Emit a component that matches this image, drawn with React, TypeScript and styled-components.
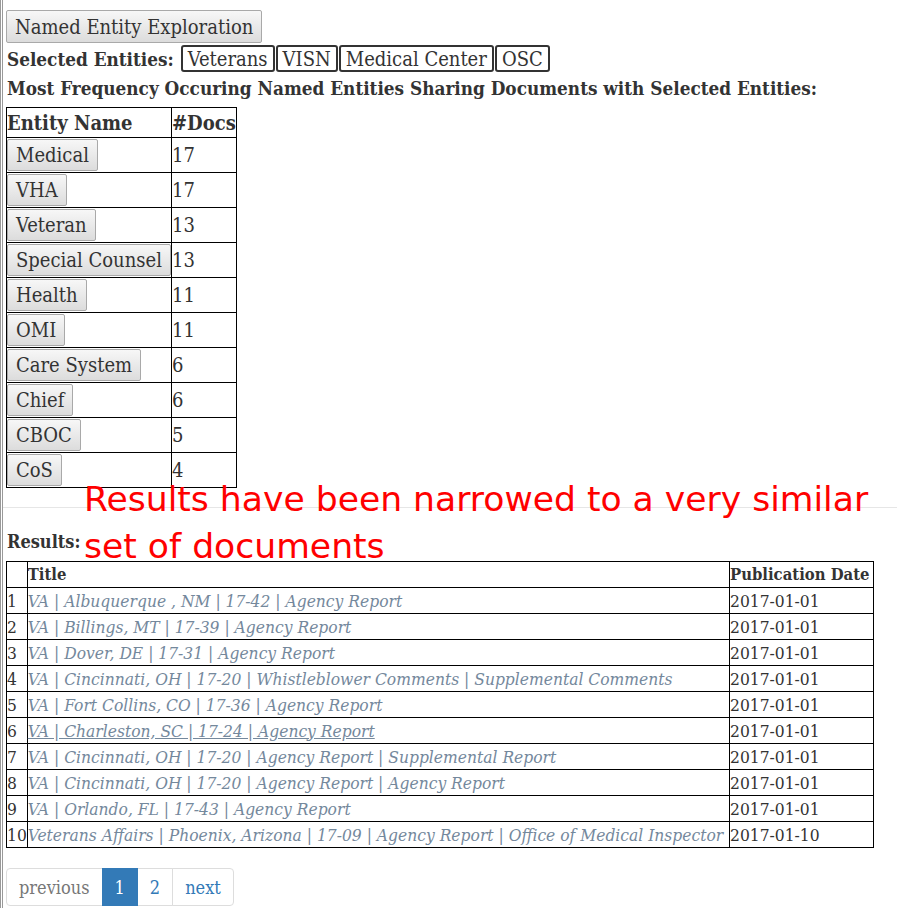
import React from "react";
import styled, { createGlobalStyle } from "styled-components";

const GlobalStyle = createGlobalStyle`
  html, body { margin: 0; padding: 0; background: #fff; }
`;

const Page = styled.div`
  position: relative;
  min-height: 908px;
  box-sizing: border-box;
  border-left: 3px double #999;
  padding: 10px 0 0 3px;
  font-family: "DejaVu Serif Condensed", "DejaVu Serif", serif;
  font-stretch: condensed;
  color: #333;
  font-size: 20px;
`;

const GrayButton = styled.button<{ $h?: number }>`
  display: inline-flex;
  align-items: center;
  box-sizing: border-box;
  height: ${(p) => p.$h ?? 33}px;
  padding: 0 8px;
  margin: 0;
  font: inherit;
  font-stretch: condensed;
  color: #333;
  background: linear-gradient(#f7f7f7, #dcdcdc);
  border: 1px solid #a9a9a9;
  border-radius: 2px;
  cursor: pointer;
  white-space: nowrap;
`;

const SelectedRow = styled.div`
  display: flex;
  align-items: center;
  height: 27px;
  margin-top: 2px;
  gap: 1px;
`;

const BoldLabel = styled.span`
  font-weight: bold;
  font-size: 18.8px;
  margin-right: 6px;
  padding-left: 1px;
`;

const Chip = styled.span`
  display: inline-flex;
  align-items: center;
  box-sizing: border-box;
  height: 27px;
  padding: 0 5px;
  border: 2px solid #333;
  border-radius: 3px;
`;

const Heading = styled.div`
  font-weight: bold;
  font-size: 18.8px;
  height: 30px;
  line-height: 30px;
  margin-top: 1px;
  padding-left: 1px;
`;

const EntityTable = styled.table`
  border-collapse: collapse;
  margin-top: 4px;
  th, td {
    border: 1px solid #000;
    padding: 0;
    text-align: left;
    vertical-align: middle;
  }
  th {
    height: 29px;
    font-weight: bold;
  }
  td {
    height: 34px;
  }
`;

const NameCell = styled.td`
  width: 164px;
`;

const CountCell = styled.td`
  width: 62px;
`;

const Rule = styled.hr`
  border: 0;
  border-top: 1px solid #e6e6e6;
  margin: 19px 0 0 -3px;
`;

const Notice = styled.div`
  position: absolute;
  left: 81px;
  right: 0;
  top: 476px;
  font-family: "DejaVu Sans", sans-serif;
  font-stretch: normal;
  font-size: 34.6px;
  line-height: 47px;
  color: #ff0000;
`;

const ResultsLabel = styled.div`
  font-weight: bold;
  font-size: 18px;
  height: 33px;
  margin-top: 20px;
  padding-left: 1px;
  line-height: 28px;
`;

const ResultsTable = styled.table`
  border-collapse: collapse;
  width: 868px;
  font-size: 17.3px;
  th, td {
    border: 1px solid #000;
    padding: 0;
    text-align: left;
    height: 25px;
    white-space: nowrap;
  }
  th {
    font-weight: bold;
    font-size: 16.5px;
  }
`;

const IdxCell = styled.td`
  width: 18px;
`;

const DateCell = styled.td`
  width: 143px;
`;

const TitleLink = styled.a<{ $hover?: boolean }>`
  color: #74889c;
  font-style: italic;
  text-decoration: ${(p) => (p.$hover ? "underline" : "none")};
  cursor: pointer;
`;

const Pager = styled.nav`
  display: flex;
  margin-top: 20px;
  font-size: 18px;
`;

const PageItem = styled.a<{ $active?: boolean; $disabled?: boolean; $first?: boolean; $last?: boolean }>`
  display: flex;
  align-items: center;
  box-sizing: border-box;
  height: 38px;
  padding: 0 12px;
  margin-left: ${(p) => (p.$first ? "0" : "-1px")};
  border: 1px solid ${(p) => (p.$active ? "#337ab7" : "#ddd")};
  background: ${(p) => (p.$active ? "#337ab7" : "#fff")};
  color: ${(p) => (p.$active ? "#fff" : p.$disabled ? "#777" : "#337ab7")};
  border-radius: ${(p) => (p.$first ? "4px 0 0 4px" : p.$last ? "0 4px 4px 0" : "0")};
  position: relative;
  z-index: ${(p) => (p.$active ? 1 : 0)};
  cursor: pointer;
`;

const entities: [string, number][] = [
  ["Medical", 17],
  ["VHA", 17],
  ["Veteran", 13],
  ["Special Counsel", 13],
  ["Health", 11],
  ["OMI", 11],
  ["Care System", 6],
  ["Chief", 6],
  ["CBOC", 5],
  ["CoS", 4],
];

const results: [string, string][] = [
  ["VA | Albuquerque , NM | 17-42 | Agency Report", "2017-01-01"],
  ["VA | Billings, MT | 17-39 | Agency Report", "2017-01-01"],
  ["VA | Dover, DE | 17-31 | Agency Report", "2017-01-01"],
  ["VA | Cincinnati, OH | 17-20 | Whistleblower Comments | Supplemental Comments", "2017-01-01"],
  ["VA | Fort Collins, CO | 17-36 | Agency Report", "2017-01-01"],
  ["VA | Charleston, SC | 17-24 | Agency Report", "2017-01-01"],
  ["VA | Cincinnati, OH | 17-20 | Agency Report | Supplemental Report", "2017-01-01"],
  ["VA | Cincinnati, OH | 17-20 | Agency Report | Agency Report", "2017-01-01"],
  ["VA | Orlando, FL | 17-43 | Agency Report", "2017-01-01"],
  ["Veterans Affairs | Phoenix, Arizona | 17-09 | Agency Report | Office of Medical Inspector", "2017-01-10"],
];

export default function App() {
  return (
    <>
      <GlobalStyle />
      <Page>
        <GrayButton>Named Entity Exploration</GrayButton>
        <SelectedRow>
          <BoldLabel>Selected Entities:</BoldLabel>
          {["Veterans", "VISN", "Medical Center", "OSC"].map((e) => (
            <Chip key={e}>{e}</Chip>
          ))}
        </SelectedRow>
        <Heading>Most Frequency Occuring Named Entities Sharing Documents with Selected Entities:</Heading>
        <EntityTable>
          <thead>
            <tr>
              <th>Entity Name</th>
              <th>#Docs</th>
            </tr>
          </thead>
          <tbody>
            {entities.map(([n, c]) => (
              <tr key={n}>
                <NameCell>
                  <GrayButton $h={32}>{n}</GrayButton>
                </NameCell>
                <CountCell>{c}</CountCell>
              </tr>
            ))}
          </tbody>
        </EntityTable>
        <Rule />
        <Notice>Results have been narrowed to a very similar set of documents</Notice>
        <ResultsLabel>Results:</ResultsLabel>
        <ResultsTable>
          <thead>
            <tr>
              <th></th>
              <th>Title</th>
              <th>Publication Date</th>
            </tr>
          </thead>
          <tbody>
            {results.map(([t, d], i) => (
              <tr key={i}>
                <IdxCell>{i + 1}</IdxCell>
                <td>
                  <TitleLink $hover={i === 5}>{t}</TitleLink>
                </td>
                <DateCell>{d}</DateCell>
              </tr>
            ))}
          </tbody>
        </ResultsTable>
        <Pager>
          <PageItem $disabled $first>previous</PageItem>
          <PageItem $active>1</PageItem>
          <PageItem>2</PageItem>
          <PageItem $last>next</PageItem>
        </Pager>
      </Page>
    </>
  );
}
